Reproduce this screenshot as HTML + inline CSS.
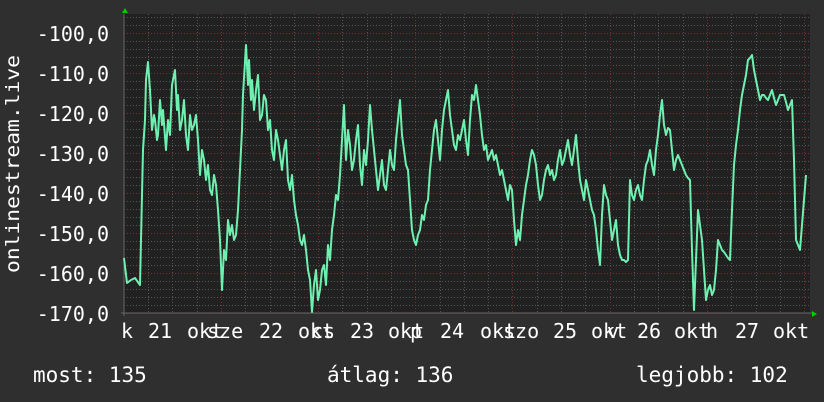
<!DOCTYPE html>
<html><head><style>
html,body{margin:0;padding:0;background:#2f2f2f;}
svg{display:block}
text{font-family:"DejaVu Sans Mono","Liberation Mono",monospace;fill:#fff;}
</style></head><body>
<svg width="824" height="402" viewBox="0 0 824 402" xmlns="http://www.w3.org/2000/svg">
<rect width="824" height="402" fill="#2f2f2f"/>
<rect x="124" y="14" width="686" height="299" fill="#212121"/>
<g stroke="#555" stroke-width="1" stroke-dasharray="1,2">
<path d="M124 17.5H810M124 25.5H810M124 41.5H810M124 49.5H810M124 57.5H810M124 65.5H810M124 81.5H810M124 89.5H810M124 97.5H810M124 105.5H810M124 121.5H810M124 129.5H810M124 137.5H810M124 145.5H810M124 161.5H810M124 169.5H810M124 177.5H810M124 185.5H810M124 201.5H810M124 209.5H810M124 217.5H810M124 225.5H810M124 241.5H810M124 249.5H810M124 257.5H810M124 265.5H810M124 281.5H810M124 289.5H810M124 297.5H810M124 305.5H810"/>
<path d="M148.5 14V313M172.5 14V313M197.5 14V313M245.5 14V313M270.5 14V313M294.5 14V313M342.5 14V313M367.5 14V313M391.5 14V313M440.5 14V313M464.5 14V313M488.5 14V313M537.5 14V313M561.5 14V313M585.5 14V313M634.5 14V313M658.5 14V313M683.5 14V313M731.5 14V313M756.5 14V313M780.5 14V313"/>
</g>
<g stroke="#7a3030" stroke-width="1" stroke-dasharray="1,2">
<path d="M124 33.5H810M124 73.5H810M124 113.5H810M124 153.5H810M124 193.5H810M124 233.5H810M124 273.5H810M124 313.5H810"/>
<path d="M221.5 14V313M318.5 14V313M415.5 14V313M512.5 14V313M610.5 14V313M707.5 14V313M804.5 14V313"/>
</g>
<path d="M124 14V316M121 313H812" stroke="#666" stroke-width="1"/>
<path d="M122 13L125 8L128 13Z M812 311L817 314L812 317Z" fill="#0c0"/>
<polyline fill="none" stroke="#6ef0b0" stroke-width="2" stroke-linejoin="round" points="124,258 127,283 131,280 135,278 140,285 143,150 145,120 146,80 148,62 150,90 152,130 154,115 155,120 157,140 158,135 160,100 162,125 163,110 166,150 168,120 170,135 172,85 175,70 177,110 178,95 180,130 182,120 184,100 186,135 188,150 190,115 192,130 194,125 196,115 198,140 200,175 202,150 204,160 206,180 208,165 210,190 212,195 214,175 216,185 218,210 220,240 222,290 224,250 226,260 228,220 230,235 232,225 234,240 236,235 238,210 240,170 242,130 243,95 246,45 248,85 249,60 251,100 252,80 254,110 255,100 256,90 258,75 260,120 262,115 264,95 266,100 268,130 270,120 272,150 274,160 276,130 278,140 280,155 282,170 284,150 286,140 288,180 290,190 292,175 294,200 296,215 298,225 300,240 302,245 304,235 306,250 308,270 310,280 312,312 314,285 316,270 318,300 320,290 322,270 324,265 326,285 328,245 330,260 332,230 334,215 336,195 338,200 340,175 342,140 344,105 346,160 348,130 350,145 352,170 354,160 356,140 358,125 360,165 362,185 364,150 366,165 368,140 370,105 372,130 374,150 376,170 378,190 380,175 382,160 384,185 386,190 388,170 390,150 392,165 394,170 396,140 398,120 400,100 402,135 404,150 406,165 408,170 410,200 412,230 414,240 416,245 418,235 420,230 422,215 424,220 426,205 428,200 430,170 432,150 434,130 436,120 438,140 440,160 442,130 444,110 446,100 448,90 450,115 452,130 454,145 456,150 458,135 460,140 462,130 464,120 466,140 468,155 470,120 472,95 474,100 476,85 478,100 480,115 482,135 484,150 486,145 488,160 490,155 492,150 494,160 496,155 498,165 500,175 502,170 504,180 506,190 508,200 510,185 512,190 514,220 516,245 518,230 520,240 522,215 524,200 526,185 528,175 530,160 532,150 534,155 536,165 538,185 540,200 542,195 544,180 546,170 548,165 550,175 552,170 554,180 556,175 558,160 560,150 562,165 564,160 566,150 568,140 570,155 572,165 574,150 576,135 578,160 580,180 582,190 584,200 586,180 588,190 590,200 592,210 594,215 596,230 598,250 600,265 602,215 604,185 606,195 608,200 610,220 612,240 614,230 616,220 618,245 620,255 622,260 624,260 626,262 628,260 630,180 632,195 634,200 636,190 638,185 640,195 642,200 644,180 646,165 648,160 650,150 652,165 654,175 656,150 658,135 660,115 662,100 664,125 666,135 668,128 670,130 672,150 674,170 676,160 678,155 680,160 682,165 684,170 686,175 688,178 690,180 692,250 694,310 696,260 698,210 700,225 702,240 704,270 706,300 708,290 710,285 712,295 714,290 716,270 718,240 720,245 722,250 724,252 726,255 728,258 730,260 732,210 734,165 736,145 738,130 740,110 742,95 744,85 746,75 748,60 750,58 752,55 754,70 756,80 758,90 760,100 762,95 764,95 766,98 768,100 770,95 772,90 774,98 776,105 778,100 780,95 782,95 784,95 786,102 788,110 790,105 792,100 794,160 796,240 798,245 800,250 802,225 804,200 806,175"/>
<g font-size="20" text-anchor="end">
<text x="109" y="41">-100,0</text>
<text x="109" y="81">-110,0</text>
<text x="109" y="121">-120,0</text>
<text x="109" y="161">-130,0</text>
<text x="109" y="201">-140,0</text>
<text x="109" y="241">-150,0</text>
<text x="109" y="281">-160,0</text>
<text x="109" y="321">-170,0</text>
</g>
<text font-size="19" transform="translate(19,273) rotate(-90)" textLength="218" lengthAdjust="spacingAndGlyphs">onlinestream.live</text>
<g font-size="20">
<text x="121" y="338">k</text>
<text x="148" y="338">21</text><text x="187" y="338">okt</text><text x="207" y="338">sze</text>
<text x="259" y="338">22</text><text x="298" y="338">okt</text><text x="311" y="338">cs</text>
<text x="350" y="338">23</text><text x="388" y="338">okt</text><text x="410" y="338">p</text>
<text x="440" y="338">24</text><text x="480" y="338">okt</text><text x="503" y="338">szo</text>
<text x="553" y="338">25</text><text x="591" y="338">okt</text><text x="607" y="338">v</text>
<text x="637" y="338">26</text><text x="674" y="338">okt</text><text x="706" y="338">h</text>
<text x="735" y="338">27</text><text x="773" y="338">okt</text>
</g>
<g font-size="21">
<text x="33" y="382">most: 135</text>
<text x="327" y="382">átlag: 136</text>
<text x="636" y="382">legjobb: 102</text>
</g>
</svg>
</body></html>
